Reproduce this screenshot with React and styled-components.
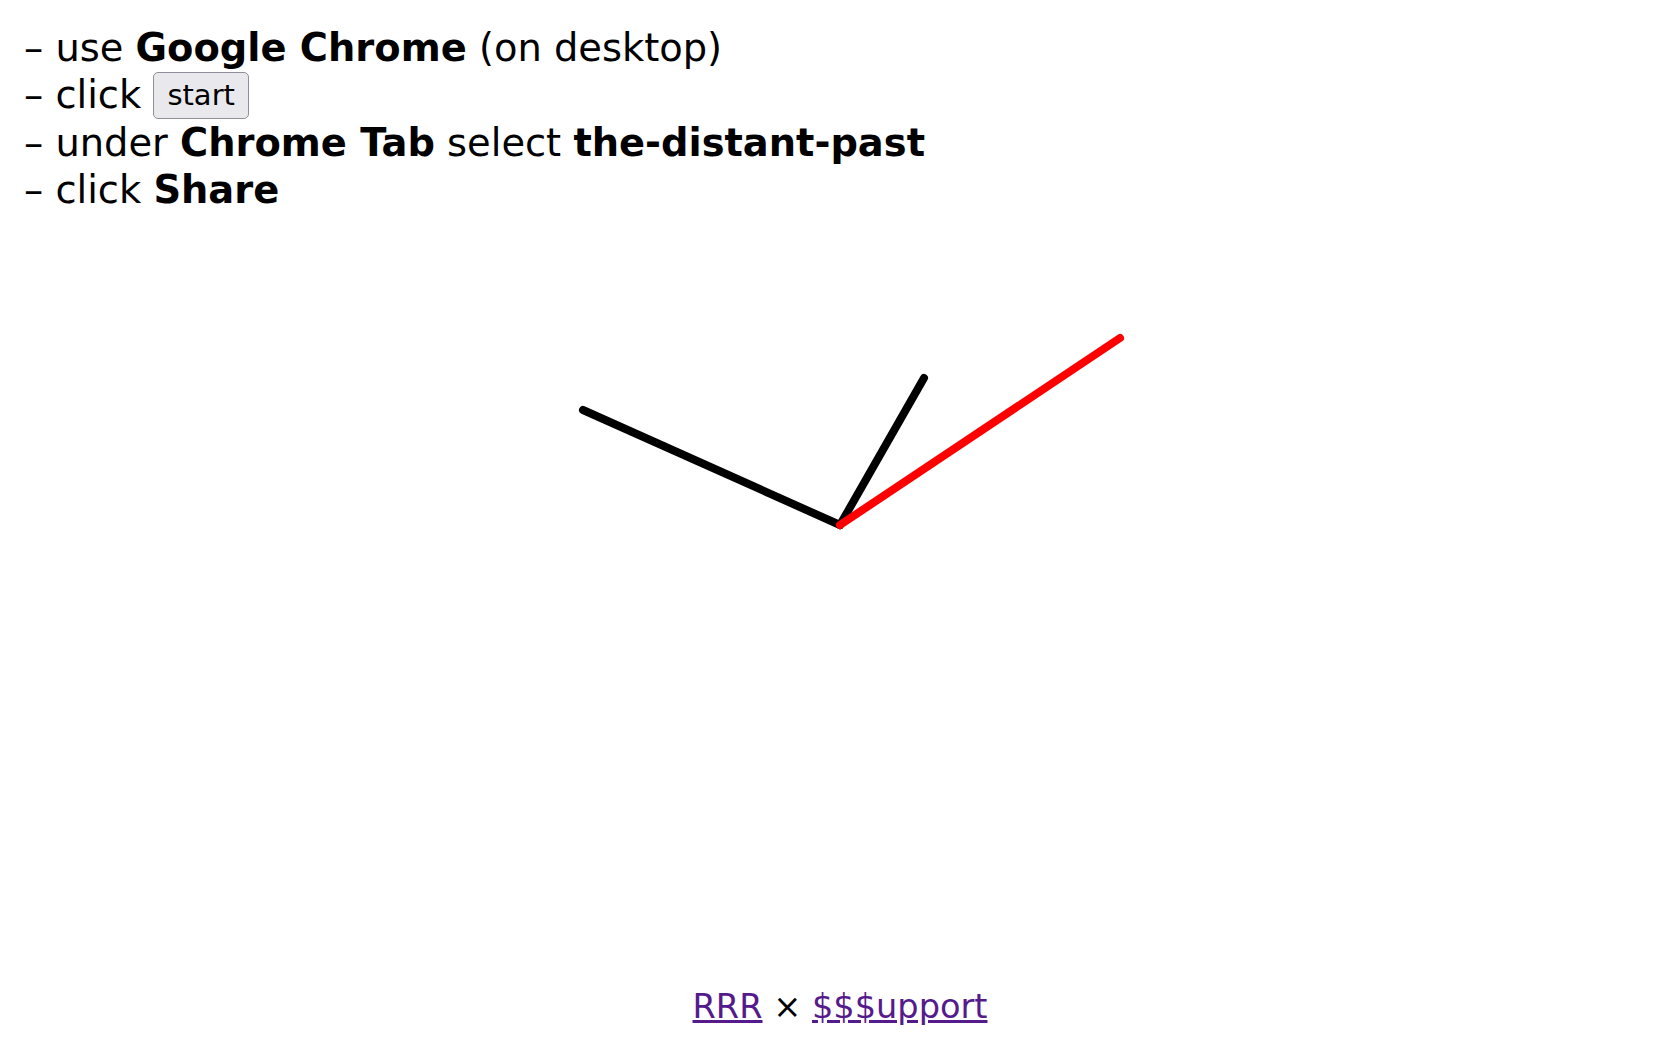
import React from 'react'
import styled, { createGlobalStyle } from 'styled-components'

const GlobalStyle = createGlobalStyle`
html, body {
  margin: 0;
  padding: 0;
  background: #fff;
}
body {
  font-family: 'DejaVu Sans', sans-serif;
  color: #000;
}
`

const hands = [
  { x: 583, y: 410, color: '#000' },
  { x: 924, y: 378, color: '#000' },
  { x: 1120, y: 338, color: '#ff0000' },
]

const App = () => (
  <>
    <GlobalStyle />
    <Page>
      <Clock viewBox="0 0 1680 1050" preserveAspectRatio="xMidYMid meet">
        {hands.map((h, i) => (
          <line
            key={i}
            x1="840"
            y1="525"
            x2={h.x}
            y2={h.y}
            stroke={h.color}
            strokeWidth="8"
            strokeLinecap="round"
          />
        ))}
      </Clock>
      <Steps>
        <Step>– use <b>Google Chrome</b> (on desktop)</Step>
        <Step>– click <StartButton>start</StartButton></Step>
        <Step>– under <b>Chrome Tab</b> select <b>the-distant-past</b></Step>
        <Step>– click <b>Share</b></Step>
      </Steps>
      <Footer>
        <Link href="#">RRR</Link> × <Link href="#">$$$upport</Link>
      </Footer>
    </Page>
  </>
)

const Page = styled.div`
display: grid;
grid-template-areas: "stack";
width: 100vw;
height: 100vh;
overflow: hidden;
`

const Clock = styled.svg`
grid-area: stack;
width: 100%;
height: 100%;
display: block;
`

const Steps = styled.div`
grid-area: stack;
align-self: start;
justify-self: start;
padding: 24px 0 0 24px;
font-size: 38.4px;
line-height: 47px;
position: relative;

b {
  font-weight: bold;
}
`

const Step = styled.div`
white-space: nowrap;
`

const StartButton = styled.button`
box-sizing: border-box;
height: 47px;
margin-top: 1px;
vertical-align: top;
font-family: 'DejaVu Sans', sans-serif;
font-size: 29px;
line-height: 33px;
padding: 6px 13px;
color: #000;
background: #e9e9ed;
border: 1px solid #8f8f9d;
border-radius: 5px;
`

const Footer = styled.div`
grid-area: stack;
align-self: end;
justify-self: center;
padding-bottom: 24px;
font-size: 33.6px;
line-height: 38px;
position: relative;
`

const Link = styled.a`
color: #551a8b;
text-decoration: underline;
`

export default App
